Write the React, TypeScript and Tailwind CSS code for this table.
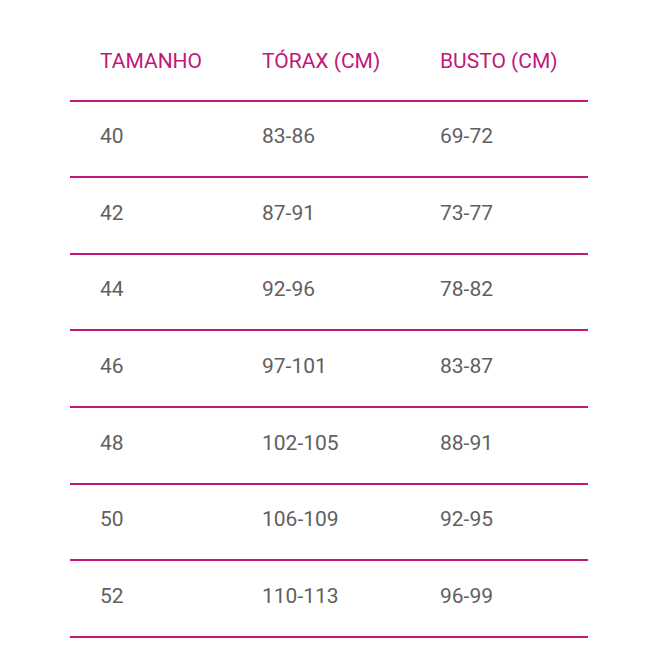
const header = ['TAMANHO', 'TÓRAX (CM)', 'BUSTO (CM)'];

const rows = [
  ['40', '83-86', '69-72'],
  ['42', '87-91', '73-77'],
  ['44', '92-96', '78-82'],
  ['46', '97-101', '83-87'],
  ['48', '102-105', '88-91'],
  ['50', '106-109', '92-95'],
  ['52', '110-113', '96-99'],
];

export default function App() {
  return (
    <div className="w-[660px] h-[660px] bg-white pt-[24px] pl-[70px]" style={{ fontFamily: 'Roboto, "Noto Sans", sans-serif' }}>
      <table className="w-[518px] table-fixed border-collapse">
        <colgroup>
          <col className="w-[162px]" />
          <col className="w-[178px]" />
          <col />
        </colgroup>
        <thead>
          <tr className="h-[76.6px] border-b-2 border-[#c2187a]">
            {header.map((h) => (
              <th key={h} className="text-left font-normal text-[21px] text-[#c2187a] pl-[30px] whitespace-nowrap">
                {h}
              </th>
            ))}
          </tr>
        </thead>
        <tbody>
          {rows.map((r) => (
            <tr key={r[0]} className="h-[76.6px] border-b-2 border-[#c2187a]">
              {r.map((c, i) => (
                <td key={i} className="pl-[30px] pb-[4px] text-[21px] text-[#5f5f5f]">
                  {c}
                </td>
              ))}
            </tr>
          ))}
        </tbody>
      </table>
    </div>
  );
}
